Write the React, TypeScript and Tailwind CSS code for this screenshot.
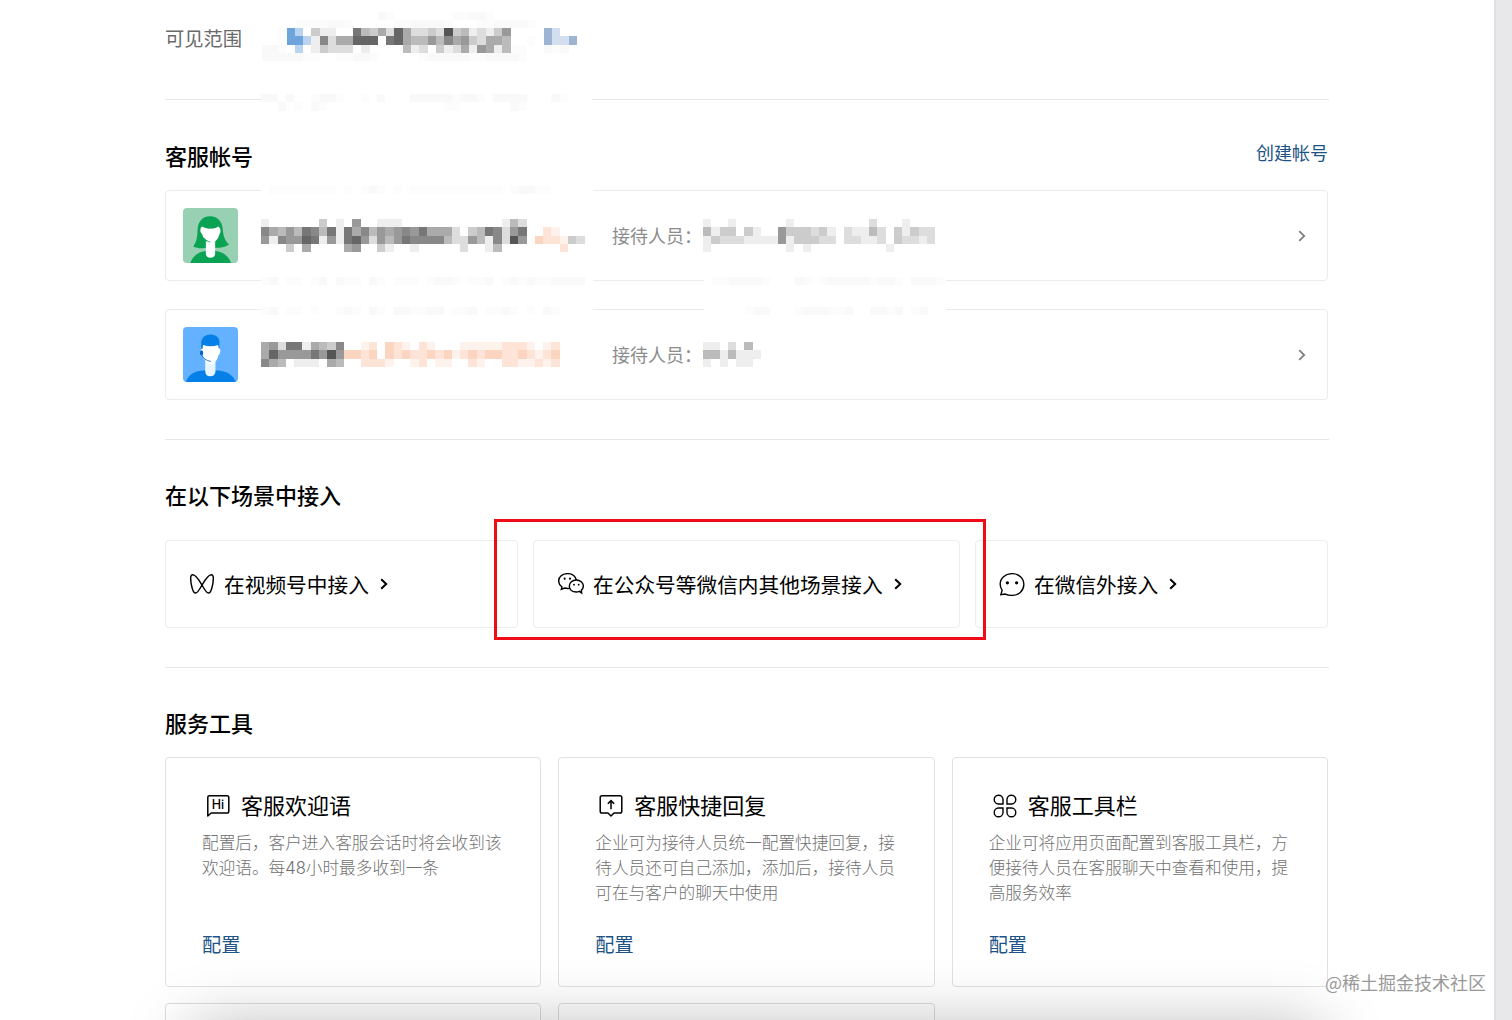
import type { ReactNode } from 'react';
import clsx from 'clsx';

// letters outside the hex range are the tinted cells
const tints: Record<string, string> = {
  m: '#f9f9f9',
  n: '#fcfcfc',
  p: '#6ea3dc',
  q: '#b9d3f1',
  r: '#9db4d2',
  s: '#d3dfee',
  w: '#f7c4a8',
  x: '#fbd5c0',
  y: '#fde4d7',
  z: '#fef2ec',
};

const cellColor = (c: string) => {
  if (c === 'f') return 'transparent';
  return tints[c] ?? `#${c}${c}${c}`;
};

const Mosaic = ({ rows }: { rows: string[] }) => (
  <div className="shrink-0">
    {rows.map((row, i) => (
      <div key={i} className="flex">
        {row.split('').map((c, j) => (
          <span
            key={j}
            className="h-[8.25px] w-[8.3px] shrink-0"
            style={{ backgroundColor: cellColor(c) }}
          />
        ))}
      </div>
    ))}
  </div>
);

const scopeRows = [
  'ffffffffffffffmnfffffffnnmmnfffffffffff',
  'ffffnnnnmmnfffffnnmmmmnfffnnmmmmnffffff',
  'ffnpqfceeff7bcad6addcd5cbedec9ffffrsfff',
  'ffnppqe8daa666f76abb9b8a9cdaabffnfrssrf',
  'mmnfqfecdddfeffffbedfcedae9aebnnffmnmff',
  'mmmmmnnffnnmmnfffffnmmmmmnnmmmmnfffffff',
];

const accounts = [
  {
    avatar: 'female',
    name: [
      'effffffcfef9ffeeeffffffffffffebdfffffff',
      '8ab9b78b7e7a8b9a9897aaadfcb78d97ffyzfff',
      '9e89967e9e769d9b978888bdd9be8d59fxyyzcd',
      'fffcfaffffa9ffceffefffffdffebfffffffyff',
    ],
    staff: [
      'effeffffffefffffffffdfffefff',
      'beccfceff9cccdcefdeebdfcecdd',
      'ecdddeeee9ecccddfddeedfcdded',
      'efffffffffefefffffffffefffff',
    ],
  },
  {
    avatar: 'male',
    name: [
      'a9d77eabc8ffzyfxyzfyzfffzzzzzyyyzfzy',
      'a699997959xxyxfxyxyyxyxzyxyxxyyxyzyx',
      '8abfeeefabffyyyzffzyfzzffyzffyyzzyzy',
    ],
    staff: ['eefdfbf', 'bbebeee', 'efefeef'],
  },
];

const tools = [
  {
    icon: 'hi',
    title: '客服欢迎语',
    lines: ['配置后，客户进入客服会话时将会收到该', '欢迎语。每48小时最多收到一条'],
  },
  {
    icon: 'reply',
    title: '客服快捷回复',
    lines: [
      '企业可为接待人员统一配置快捷回复，接',
      '待人员还可自己添加，添加后，接待人员',
      '可在与客户的聊天中使用',
    ],
  },
  {
    icon: 'toolbar',
    title: '客服工具栏',
    lines: [
      '企业可将应用页面配置到客服工具栏，方',
      '便接待人员在客服聊天中查看和使用，提',
      '高服务效率',
    ],
  },
];

const FemaleAvatar = () => (
  <svg viewBox="0 0 166 166" className="size-[55px] shrink-0 rounded-[4px]">
    <rect width="166" height="166" fill="#97d0b2" />
    <path
      d="M82 25C57 25 45 43 44 66C43 91 41 103 31 116C45 124 66 121 82 119C98 121 120 122 139 110C126 98 122 86 120 64C118 42 106 25 82 25Z"
      fill="#09a353"
    />
    <path d="M22 166C30 144 48 131 70 130H97C120 132 138 145 145 166Z" fill="#09a353" />
    <path d="M69 100H97V137Q97 150 83 150Q69 150 69 137Z" fill="#fff" />
    <path
      d="M57 56Q71 64 83 62Q96 64 107 56L111 60Q116 70 110 79Q108 91 98 100Q85 109 74 99Q60 91 58 79Q50 73 53 62Z"
      fill="#fff"
    />
    <path d="M64 91Q70 102 83 103" fill="none" stroke="#09a353" strokeWidth="2" />
  </svg>
);

const MaleAvatar = () => (
  <svg viewBox="0 0 166 166" className="size-[55px] shrink-0 rounded-[4px]">
    <rect width="166" height="166" fill="#63b1ff" />
    <path d="M8 166C18 140 38 132 62 131H104C130 132 150 143 160 166Z" fill="#0580e9" />
    <path d="M67 98H98V132Q98 149 82 149Q67 149 67 132Z" fill="#e8f4ff" />
    <path
      d="M59 52H107V65Q115 64 112 76Q111 85 107 85Q104 103 88 112Q75 112 67 100Q60 94 58 84Q52 80 54 69Q56 64 59 66Z"
      fill="#fff"
    />
    <path d="M55 65V43Q60 23 83 23Q107 24 110 42V65L106 54Q83 62 61 54L58 67Z" fill="#0580e9" />
    <ellipse cx="56" cy="78" rx="5" ry="8" fill="#0566c8" />
    <path d="M57 84Q62 100 84 104" fill="none" stroke="#0566c8" strokeWidth="2.5" />
  </svg>
);

const ChannelsIcon = () => (
  <svg viewBox="0 0 70 58" className="h-[20px] w-[24px]" fill="none" stroke="#000" strokeWidth="4.2">
    <path d="M8 2C17 2 28 20 35 32C42 45 48 55.5 54 55.5C62 55.5 68 28 68 12C68 5 66 2 62 2C53 2 42 20 35 32C28 45 22 55.5 16 55.5C8 55.5 2 28 2 12C2 5 4 2 8 2Z" />
  </svg>
);

const WechatIcon = () => (
  <svg viewBox="0 0 78 66" className="h-[22px] w-[26px]" fill="none" stroke="#000" strokeWidth="4.2">
    <path d="M55 21C52 9 41 2 28 2C13 2 2 12 2 24C2 32 6 38 12 42L10 49L20 45Q27 47 34 46" />
    <path d="M55 21C43 21 34 29 34 39C34 50 43 57 55 57Q60 57 64 55L71 60L70 52C74 48 76 44 76 39C76 29 67 21 55 21Z" />
    <g fill="#000" stroke="none">
      <circle cx="20" cy="17" r="3.2" />
      <circle cx="36" cy="17" r="3.2" />
      <circle cx="48" cy="35" r="2.8" />
      <circle cx="62" cy="35" r="2.8" />
    </g>
  </svg>
);

const ChatIcon = () => (
  <svg viewBox="0 0 78 70" className="h-[23px] w-[26px]" fill="none" stroke="#000" strokeWidth="4.2">
    <path d="M39 2C18 2 3 16 3 34C3 42 6 48 9 53L5 66L19 64Q28 68 39 68C60 68 75 53 75 35C75 16 60 2 39 2Z" />
    <circle cx="25" cy="30" r="5" fill="#000" stroke="none" />
    <circle cx="53" cy="30" r="5" fill="#000" stroke="none" />
  </svg>
);

const ToolIcon = ({ name }: { name: string }) => {
  if (name === 'hi') {
    return (
      <svg viewBox="0 0 24 24" className="size-[24px]">
        <path
          d="M1.8 22V3.2Q1.8 1.8 3.2 1.8H21Q22.8 1.8 22.8 3.6V17.2Q22.8 19 21 19H5.2Z"
          fill="none"
          stroke="#000"
          strokeWidth="1.5"
          strokeLinejoin="round"
        />
        <text x="5.8" y="15" className="font-['Inter'] text-[12.5px] font-medium">
          Hi
        </text>
      </svg>
    );
  }
  if (name === 'reply') {
    return (
      <svg viewBox="0 0 24 24" className="size-[24px]" fill="none" stroke="#000" strokeWidth="1.5">
        <path
          d="M3 1.8H21Q22.8 1.8 22.8 3.6V17.2Q22.8 19 21 19H15L12 22L9 19H3Q1.2 19 1.2 17.2V3.6Q1.2 1.8 3 1.8Z"
          strokeLinejoin="round"
        />
        <path d="M12 15.2V7M8.8 9.8L12 6.6L15.2 9.8" />
      </svg>
    );
  }
  return (
    <svg viewBox="0 0 24 24" className="size-[24px]" fill="none" stroke="#000" strokeWidth="1.4">
      <path d="M10 10H5.4A4.4 4.4 0 1 1 10 5.2Z" />
      <path d="M14 10H18.6A4.4 4.4 0 1 0 14 5.2Z" />
      <path d="M10 14H5.4A4.4 4.4 0 1 0 10 18.8Z" />
      <path d="M14 14H18.6A4.4 4.4 0 1 1 14 18.8Z" />
    </svg>
  );
};

const Chevron = ({ className }: { className?: string }) => (
  <svg viewBox="0 0 8 12" className={clsx('h-[12px] w-[8px]', className)} fill="none" stroke="currentColor">
    <path d="M1.2 1.2L6.2 6L1.2 10.8" />
  </svg>
);

const AccessCard = ({
  icon,
  title,
  className,
}: {
  icon: ReactNode;
  title: string;
  className: string;
}) => (
  <div className={clsx('flex h-[88px] items-center rounded-[4px] border border-[#ededed]', className)}>
    <span className="flex w-[26px] justify-center">{icon}</span>
    <span className="mt-[2px] ml-[9px] text-[20.7px]">{title}</span>
    <Chevron className="ml-[11px] stroke-[2]" />
  </div>
);

const Divider = () => <div className="h-px w-[1164px] bg-[#e6e6e6]" />;

export default function App() {
  return (
    <div className="relative flex h-[1020px] w-[1512px] justify-between overflow-hidden bg-white font-['Noto_Sans_CJK_SC',sans-serif] whitespace-nowrap text-black">
      <main className="ml-[165px] w-[1163px]">
        <div className="relative">
          <div className="flex h-[99px] pt-[11.5px]">
            <span className="w-[96.7px] pt-[15.5px] text-[19.3px] leading-[22px] text-[#6a6a6a]">可见范围</span>
            <Mosaic rows={scopeRows} />
          </div>
          <Divider />
          <div className="absolute top-[94px] left-[96px] w-[331px] bg-white">
            <Mosaic
              rows={['mmfmffnmmnffnfmfffmmmmmnmmnfmmmmfffmnff', 'ffmfnfmnffffffffffffffnnffffffmnfffffff']}
            />
          </div>
        </div>

        <section className="h-[339px]">
          <div className="flex h-[90px] justify-between">
            <h2 className="pt-[39px] text-[22px] leading-[32px] font-medium">客服帐号</h2>
            <a className="pt-[39px] text-[18px] leading-[26px] text-[#1d5385]">创建帐号</a>
          </div>
          <div className="flex flex-col gap-[28px]">
            {accounts.map((account) => (
              <div
                key={account.avatar}
                className="relative flex h-[91px] items-center rounded-[4px] border border-[#ebebeb] pr-[21px] pl-[17px]"
              >
                {/* blanked stretches of the card outline */}
                {account.avatar === 'female' ? (
                  <>
                    <div className="absolute -top-[5px] left-[95px] w-[332px] bg-white">
                      <Mosaic rows={['fnnnnnnnnfnfnmnfnfnnnnnnnnnnnfnmmnnffff']} />
                    </div>
                    <div className="absolute -bottom-[5px] left-[95px] w-[332px] bg-white">
                      <Mosaic rows={['nmfnnfnmfmnnfmnfnnnfnmmnfnnmfnmnmnnmmmm']} />
                    </div>
                    <div className="absolute -bottom-[5px] left-[538px] w-[242px] bg-white">
                      <Mosaic rows={['fnnmmmmnfffmnfnmmmmmnmmnfmmmn']} />
                    </div>
                    <FemaleAvatar />
                  </>
                ) : (
                  <>
                    <div className="absolute -top-[3px] left-[95px] w-[332px] bg-white">
                      <Mosaic rows={['nmfnnfnffnmnfmnfmmnnmmfnnmfnnmnfnfmnfff']} />
                    </div>
                    <div className="absolute -top-[3px] left-[538px] w-[242px] bg-white">
                      <Mosaic rows={['fffffnmmfffnmmmnnmffmmnmfnmff']} />
                    </div>
                    <MaleAvatar />
                  </>
                )}
                <div className="ml-[23px] w-[351px]">
                  <Mosaic rows={account.name} />
                </div>
                <span className="w-[91px] text-[18px] text-[#8c8c8c]">接待人员：</span>
                <Mosaic rows={account.staff} />
                <Chevron className="ml-auto stroke-[1.8] text-[#808080]" />
              </div>
            ))}
          </div>
        </section>
        <Divider />

        <section className="h-[227px]">
          <h2 className="h-[100px] pt-[38px] text-[22px] leading-[32px] font-medium">在以下场景中接入</h2>
          <div className="relative flex justify-between">
            <AccessCard className="w-[353px] pl-[23px]" icon={<ChannelsIcon />} title="在视频号中接入" />
            <AccessCard className="w-[427px] pl-[24px]" icon={<WechatIcon />} title="在公众号等微信内其他场景接入" />
            <AccessCard className="w-[353px] pl-[23px]" icon={<ChatIcon />} title="在微信外接入" />
            <div className="absolute -top-[21px] left-[329px] h-[121px] w-[492px] border-3 border-[#f00b18]" />
          </div>
        </section>
        <Divider />

        <section>
          <h2 className="h-[89px] pt-[38px] text-[22px] leading-[32px] font-medium">服务工具</h2>
          <div className="grid grid-cols-3 gap-[17px]">
            {tools.map((tool) => (
              <div key={tool.title} className="h-[230px] rounded-[4px] border border-[#e0e0e0] px-[36px] pt-[32px]">
                <div className="flex h-[32px] items-center gap-[11px] pl-[4px]">
                  <ToolIcon name={tool.icon} />
                  <h3 className="-mt-[4px] text-[22px]">{tool.title}</h3>
                </div>
                <div className="mt-[9px] h-[99px] font-['Inter','Noto_Sans_CJK_SC',sans-serif] text-[16.65px] leading-[25px] font-light text-[#707070]">
                  {tool.lines.map((line) => (
                    <p key={line}>{line}</p>
                  ))}
                </div>
                <a className="block text-[19.2px] leading-[28px] text-[#1d5385]">配置</a>
              </div>
            ))}
            <div className="-mt-px h-[60px] rounded-[4px] border border-[#dcdcdc]" />
            <div className="-mt-px h-[60px] rounded-[4px] border border-[#dcdcdc]" />
          </div>
        </section>
      </main>

      <div className="w-[18px] border-l-2 border-[#e0e0e2] bg-[#e8e8ea]" />

      <div className="absolute top-[1026px] left-[190px] h-[80px] w-[1130px] shadow-[0_0_64px_rgba(0,0,0,0.28)]" />
      <span className="absolute top-[970px] left-[1325px] text-[18px] leading-[24px] text-[#999] [text-shadow:0_0_2px_#fff]">
        @稀土掘金技术社区
      </span>
    </div>
  );
}
